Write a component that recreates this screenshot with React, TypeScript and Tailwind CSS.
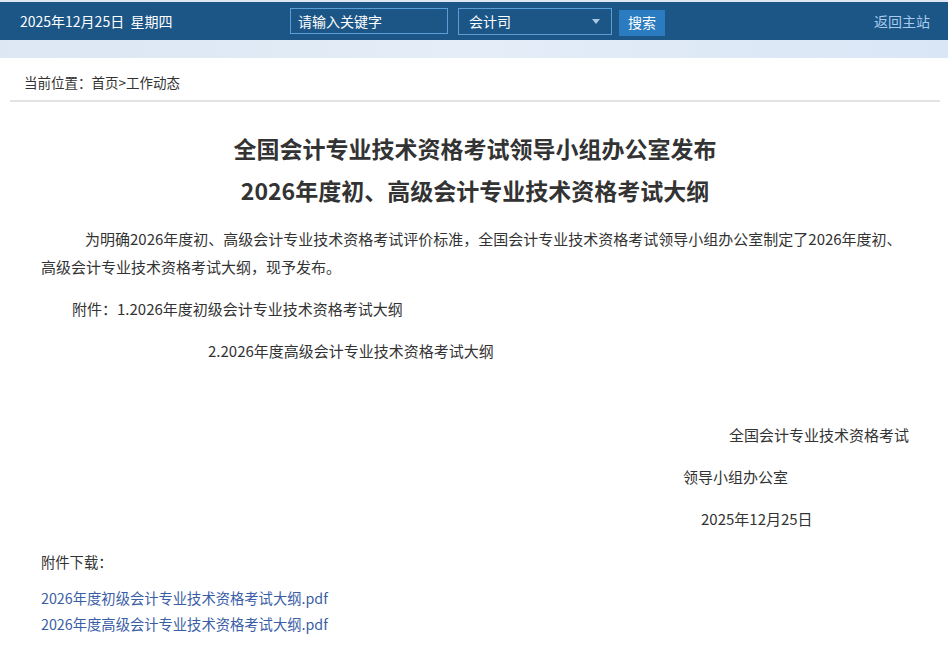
const font = "font-['Microsoft_YaHei','Noto_Sans_CJK_SC',sans-serif]"

function TopBar() {
  return (
    <div className="bg-[#dfe8f2] pt-[2px]">
      <div className="flex h-[38px] items-center bg-[#1c5686] text-[14px] text-white">
        <div className="ml-[20px] w-[270px] whitespace-pre">2025年12月25日  星期四</div>
        <div className="flex h-[26px] w-[158px] items-center border border-[#5b9fd6] pl-[7px]">请输入关键字</div>
        <div className="ml-[10px] flex h-[27px] w-[154px] items-center justify-between border border-[#5b9fd6] pl-[10px] pr-[11px]">
          <span>会计司</span>
          <span className="h-0 w-0 border-x-[4px] border-t-[5px] border-x-transparent border-t-[#aac6e0]" />
        </div>
        <button className="ml-[7px] mt-[3px] h-[26px] w-[46px] bg-[#2a7bbf] text-white">搜索</button>
        <div className="ml-auto mr-[18px] text-[#a6cbee]">返回主站</div>
      </div>
      <div className="h-[18px] bg-gradient-to-r from-[#dce7f3] via-[#e4edf8] to-[#d9e6f5]" />
    </div>
  )
}

function Article() {
  return (
    <div className="ml-[10px] w-[930px]">
      <div className="border-b-2 border-[#e3e3e3] pb-[8px] pl-[14px] pt-[14px] text-[13.5px] leading-[20px] text-[#333]">
        当前位置：首页&gt;工作动态
      </div>

      <h1 className="mt-[25px] text-center text-[23px] font-bold leading-[42px] text-[#333]">
        全国会计专业技术资格考试领导小组办公室发布
        <br />
        2026年度初、高级会计专业技术资格考试大纲
      </h1>

      <div className="mt-[14px] pl-[31px] pr-[30px] text-[15px] leading-[28px] text-[#333]">
        <p className="mb-[14px] indent-[44px]">
          为明确2026年度初、高级会计专业技术资格考试评价标准，全国会计专业技术资格考试领导小组办公室制定了2026年度初、高级会计专业技术资格考试大纲，现予发布。
        </p>
        <p className="mb-[14px] pl-[31px]">附件：1.2026年度初级会计专业技术资格考试大纲</p>
        <p className="mb-[14px] pl-[167px]">2.2026年度高级会计专业技术资格考试大纲</p>
        <p className="mb-[14px] h-[28px]" />
        <p className="mb-[14px] pl-[688px]">全国会计专业技术资格考试</p>
        <p className="mb-[14px] pl-[642px]">领导小组办公室</p>
        <p className="pl-[660px]">2025年12月25日</p>
      </div>

      <div className="mt-[16px] pl-[31px] text-[14.3px] leading-[26px]">
        <div className="mb-[10px] text-[#333]">附件下载：</div>
        <a className="block text-[#3a5ea6]">2026年度初级会计专业技术资格考试大纲.pdf</a>
        <a className="block text-[#3a5ea6]">2026年度高级会计专业技术资格考试大纲.pdf</a>
      </div>
    </div>
  )
}

export default function App() {
  return (
    <div className={`${font} min-h-screen bg-white`}>
      <TopBar />
      <Article />
    </div>
  )
}
